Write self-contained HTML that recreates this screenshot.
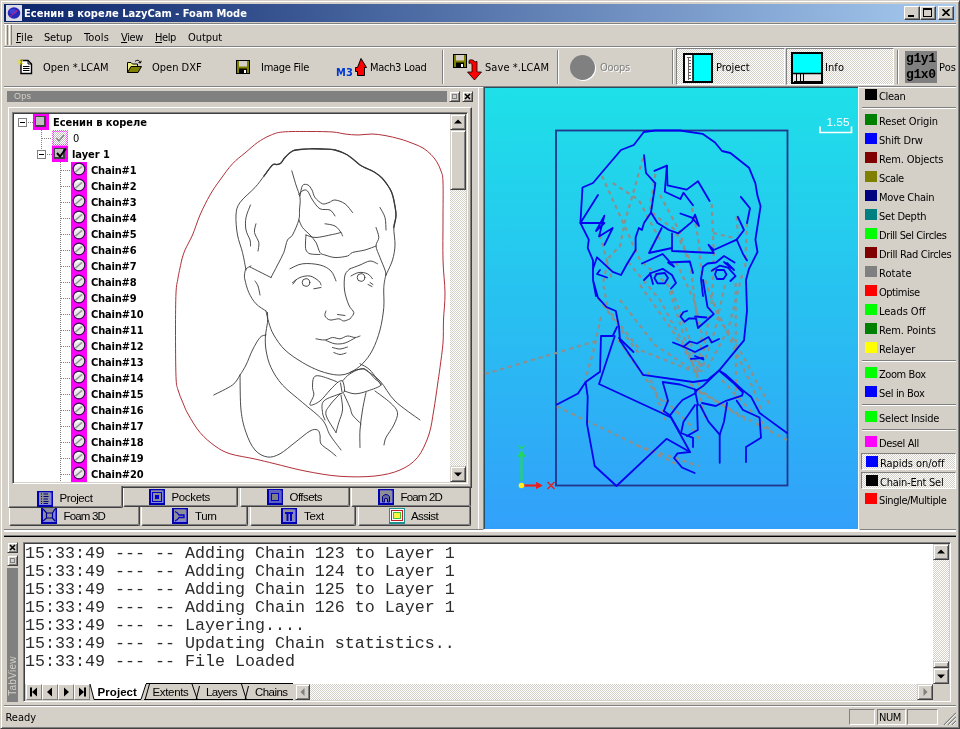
<!DOCTYPE html>
<html><head><meta charset="utf-8"><title>LazyCam</title>
<style>
*{box-sizing:border-box;margin:0;padding:0}
html,body{width:960px;height:729px;overflow:hidden;background:#d4d0c8}
body{position:relative;will-change:transform;font-family:"DejaVu Sans Condensed","Liberation Sans",sans-serif;font-size:11px;color:#000;line-height:1}
.a{position:absolute}
.t{position:absolute;white-space:nowrap;line-height:14px;height:14px}
.tb{font-family:"Liberation Sans",sans-serif;font-size:11.5px}
.raised{border:1px solid;border-color:#fff #404040 #404040 #fff;box-shadow:inset -1px -1px 0 #808080;background:#d4d0c8}
.raised2{border:1px solid;border-color:#d4d0c8 #404040 #404040 #d4d0c8;box-shadow:inset 1px 1px 0 #fff,inset -1px -1px 0 #808080;background:#d4d0c8}
.sunk{border:1px solid;border-color:#808080 #fff #fff #808080;box-shadow:inset 1px 1px 0 #404040,inset -1px -1px 0 #d4d0c8}
.sunk1{border:1px solid;border-color:#808080 #fff #fff #808080}
.chk{background:repeating-conic-gradient(#fff 0 25%,#d4d0c8 0 50%) 0 0/2px 2px}
.hl{background:#808080;border-bottom:1px solid #fff}
.vl{background:#808080;border-right:1px solid #fff}
.tab{background:#d4d0c8;border-left:1px solid #fff;border-right:1px solid #404040;border-bottom:1px solid #404040;box-shadow:inset -1px -1px 0 #808080;border-radius:0 0 2px 2px}
.log{position:absolute;left:25px;white-space:pre;font-family:"Liberation Mono",monospace;font-size:16.67px;line-height:18px;height:18px;color:#2c2c2c}
</style></head><body>
<div class="a" style="left:0;top:0;width:960px;height:729px;border:1px solid;border-color:#d4d0c8 #404040 #404040 #d4d0c8;box-shadow:inset 1px 1px 0 #fff,inset -1px -1px 0 #808080"></div>
<div class="a" id="title" style="left:4px;top:4px;width:952px;height:18px;background:linear-gradient(90deg,#0a246a,#a6caf0)"></div>
<div class="t" style="left:24px;top:7px;letter-spacing:0.02px;color:#fff;font-weight:bold;">Есенин в кореле LazyCam - Foam Mode</div>
<div class="a raised" style="left:904px;top:6px;width:16px;height:14px"></div>
<div class="a" style="left:908px;top:15px;width:6px;height:2px;background:#000"></div>
<div class="a raised" style="left:920px;top:6px;width:16px;height:14px"></div>
<div class="a" style="left:923px;top:8px;width:9px;height:9px;border:1px solid #000;border-top-width:2px"></div>
<div class="a raised" style="left:938px;top:6px;width:16px;height:14px"></div>
<svg class="a" style="left:942px;top:9px" width="8" height="7"><path d="M0.500 0L7.500 7M7.500 0L0.500 7" stroke="#000" stroke-width="1.600"/></svg>
<svg class="a" style="left:6px;top:5px" width="16" height="16"><rect width="16" height="16" fill="#dcdce8"/><ellipse cx="8" cy="8" rx="6.300" ry="5.700" fill="#2828b8"/><ellipse cx="7" cy="6.500" rx="3.500" ry="2.500" fill="#4040d8"/><path d="M4.500 11.500L7 9L9 7.500L11 5.500" stroke="#d02878" stroke-width="1.200" stroke-dasharray="1.500 1" fill="none"/></svg>
<div class="a" style="left:5px;top:25px;width:3px;height:20px;border-left:1px solid #fff;border-right:1px solid #808080"></div><div class="a" style="left:9px;top:25px;width:3px;height:20px;border-left:1px solid #fff;border-right:1px solid #808080"></div>
<div class="t" style="left:16px;top:31px;letter-spacing:0.13px;"><u>F</u>ile</div>
<div class="t" style="left:44px;top:31px;letter-spacing:-0.16px;">Setup</div>
<div class="t" style="left:84px;top:31px;letter-spacing:0.16px;">Tools</div>
<div class="t" style="left:121px;top:31px;letter-spacing:-0.37px;"><u>V</u>iew</div>
<div class="t" style="left:155px;top:31px;letter-spacing:-0.39px;"><u>H</u>elp</div>
<div class="t" style="left:188px;top:31px;letter-spacing:-0.06px;">Output</div>
<div class="a hl" style="left:4px;top:23px;width:952px;height:2px"></div>
<div class="a hl" style="left:4px;top:46px;width:952px;height:2px"></div>
<div class="a hl" style="left:4px;top:86px;width:952px;height:2px"></div>
<svg class="a" style="left:16px;top:58px" width="18" height="17"><path d="M5 2.500H12L15.500 6V15.500H5Z" fill="#fff" stroke="#000" stroke-width="1.400"/><path d="M12 2.500V6H15.500" fill="none" stroke="#000"/><path d="M7 8.500H13.500M7 10.500H13.500M7 12.500H13.500" stroke="#000" stroke-width="1"/><path d="M1 2L7 6M4 1L4 7M7 2L1 6" stroke="#e8e020" stroke-width="1"/></svg>
<div class="t" style="left:43px;top:61px;letter-spacing:0.01px;">Open *.LCAM</div>
<svg class="a" style="left:126px;top:58px" width="18" height="16"><path d="M1.500 14.500V4.500H5L6.500 6H11.500V8.500" fill="#f0f080" stroke="#000"/><path d="M1.500 14.500L5 8.500H15.500L12 14.500Z" fill="#808000" stroke="#000"/><path d="M9 3.500C11 1.500 13.500 2 14.500 5M14.500 5L12.500 4.500M14.500 5L15.200 2.800" fill="none" stroke="#000"/></svg>
<div class="t" style="left:152px;top:61px;">Open DXF</div>
<svg class="a" style="left:236px;top:60px" width="14" height="14"><rect x="0.500" y="0.500" width="13" height="13" fill="#808000" stroke="#000"/><rect x="3" y="1" width="8" height="5.500" fill="#d4d0c8"/><rect x="3" y="8.500" width="8" height="5" fill="#000"/><rect x="8" y="10" width="2" height="3" fill="#fff"/></svg>
<div class="t" style="left:261px;top:61px;letter-spacing:-0.26px;">Image File</div>
<div class="t" style="left:336px;top:66px;letter-spacing:0.12px;font-weight:bold;color:#0038d0;">M3</div>
<svg class="a" style="left:354px;top:57px" width="14" height="20"><path d="M7 1.500L12.500 10.500H10.500V18.500H3.500V14.500H1.500V10.500H3.500Z" fill="#f00" stroke="#000" stroke-width="1"/></svg>
<div class="t" style="left:370px;top:61px;letter-spacing:-0.30px;">Mach3 Load</div>
<div class="a vl" style="left:442px;top:50px;width:2px;height:34px"></div>
<svg class="a" style="left:453px;top:54px" width="14" height="14"><rect x="0.500" y="0.500" width="13" height="13" fill="#808000" stroke="#000"/><rect x="3" y="1" width="8" height="5.500" fill="#d4d0c8"/><rect x="3" y="8.500" width="8" height="5" fill="#000"/><rect x="8" y="10" width="2" height="3" fill="#fff"/></svg>
<svg class="a" style="left:466px;top:58px" width="18" height="24"><path d="M3 2.500C5 1 8 2 9 4L11 3.500V14H15.500L8.500 22L1.500 14H6V7C6 5 4.500 4.500 3 5.500Z" fill="#f00" stroke="#000" stroke-width="0.800"/></svg>
<div class="t" style="left:485px;top:61px;letter-spacing:0.07px;">Save *.LCAM</div>
<div class="a vl" style="left:557px;top:50px;width:2px;height:34px"></div>
<div class="a" style="left:570px;top:55px;width:25px;height:25px;border-radius:50%;background:#808080;box-shadow:1px 1px 0 #fff"></div>
<div class="t" style="left:600px;top:61px;letter-spacing:-0.27px;color:#808080;text-shadow:1px 1px 0 #fff;">Ooops</div>
<div class="a vl" style="left:672px;top:50px;width:2px;height:34px"></div>
<div class="a chk" style="left:676px;top:48px;width:109px;height:37px;border:1px solid;border-color:#808080 #fff #fff #808080"></div>
<svg class="a" style="left:683px;top:53px" width="30" height="30"><rect x="1" y="1" width="28" height="28" fill="#fff" stroke="#000" stroke-width="2"/><rect x="10" y="2" width="18" height="26" fill="#0ff"/><path d="M10 2V28" stroke="#000" stroke-width="1.500"/><path d="M5.500 4V27M4 4.500H8M5 7.500H8M5 10.500H8M5 13.500H8M5 16.500H8M5 19.500H8M5 22.500H8M5 25.500H8" stroke="#606060" stroke-width="1"/></svg>
<div class="t" style="left:716px;top:61px;letter-spacing:-0.04px;">Project</div>
<div class="a chk" style="left:786px;top:48px;width:108px;height:37px;border:1px solid;border-color:#808080 #fff #fff #808080"></div>
<svg class="a" style="left:791px;top:52px" width="32" height="32"><rect x="1" y="1" width="30" height="30" fill="#fff" stroke="#000" stroke-width="2"/><rect x="2" y="2" width="28" height="19" fill="#0ff"/><rect x="2" y="22" width="28" height="8" fill="#ebe9e5"/><path d="M2 21.500H30" stroke="#000" stroke-width="1.500"/><path d="M5.500 22V29.500M9.500 22V29.500M12.500 22V29.500M3 29.500H30" stroke="#000" stroke-width="1"/></svg>
<div class="t" style="left:825px;top:61px;letter-spacing:0.07px;">Info</div>
<div class="a vl" style="left:897px;top:50px;width:2px;height:34px"></div>
<div class="a" style="left:905px;top:51px;width:32px;height:32px;background:#808080"></div>
<div class="t" style="left:906px;top:52px;font-family:'Liberation Mono',monospace;font-weight:bold;font-size:13px;letter-spacing:-0.400px">g1y1</div>
<div class="t" style="left:906px;top:68px;font-family:'Liberation Mono',monospace;font-weight:bold;font-size:13px;letter-spacing:-0.400px">g1x0</div>
<div class="t" style="left:939px;top:61px;letter-spacing:0.07px;">Pos</div>
<div class="a" style="left:7px;top:91px;width:440px;height:11px;background:#808080"></div>
<div class="t" style="left:14px;top:90px;color:#d4d0c8;font-size:9px;line-height:13px;letter-spacing:0.3px;font-family:'Liberation Sans',sans-serif">Ops</div>
<div class="a raised2" style="left:449px;top:91px;width:11px;height:11px"></div>
<div class="a" style="left:452px;top:94px;width:5px;height:5px;border:1px solid #808080"></div>
<div class="a raised2" style="left:462px;top:91px;width:11px;height:11px"></div>
<svg class="a" style="left:464px;top:93px" width="7" height="7"><path d="M1 1L6 6M6 1L1 6" stroke="#000" stroke-width="1.600"/></svg>
<div class="a" style="left:478px;top:88px;width:1px;height:441px;background:#fff"></div>
<div class="a" style="left:4px;top:529px;width:480px;height:1px;background:#808080"></div>
<div class="a" style="left:8px;top:107px;width:464px;height:381px;border:1px solid;border-color:#fff #404040 #404040 #fff;box-shadow:inset -1px -1px 0 #808080"></div>
<div class="a sunk" style="left:12px;top:112px;width:456px;height:372px;background:#fff"></div>
<div class="a chk" style="left:450px;top:114px;width:16px;height:368px"></div>
<div class="a raised2" style="left:450px;top:114px;width:16px;height:16px"></div>
<svg class="a" style="left:454px;top:119px" width="8" height="5"><path d="M0 4.500L4 0.500L8 4.500Z" fill="#000"/></svg>
<div class="a raised2" style="left:450px;top:130px;width:16px;height:60px"></div>
<div class="a raised2" style="left:450px;top:466px;width:16px;height:16px"></div>
<svg class="a" style="left:454px;top:472px" width="8" height="5"><path d="M0 0.500L4 4.500L8 0.500Z" fill="#000"/></svg>
<div id="tree">
<div class="a" style="left:18px;top:118px;width:9px;height:9px;border:1px solid #808080;background:#fff"></div><div class="a" style="left:20px;top:122px;width:5px;height:1px;background:#000"></div>
<div class="a" style="left:28px;top:122px;width:5px;height:1px;background:repeating-linear-gradient(90deg,#808080 0 1px,transparent 1px 2px)"></div>
<div class="a" style="left:33px;top:114px;width:16px;height:16px;background:#f0f"></div>
<div class="a" style="left:35px;top:116px;width:11px;height:11px;background:#c0c0c0;border:1px solid #404040;border-right-width:2px;border-bottom-width:2px"></div>
<div class="t" style="left:53px;top:116px;letter-spacing:-0.03px;font-weight:bold;">Есенин в кореле</div>
<div class="a" style="left:41px;top:130px;width:1px;height:20px;background:repeating-linear-gradient(180deg,#808080 0 1px,transparent 1px 2px)"></div>
<div class="a" style="left:42px;top:138px;width:10px;height:1px;background:repeating-linear-gradient(90deg,#808080 0 1px,transparent 1px 2px)"></div>
<div class="a" style="left:52px;top:130px;width:16px;height:16px;background:repeating-conic-gradient(#f0f 0 25%,#fff 0 50%) 0 0/2px 2px;opacity:.75"></div>
<div class="a" style="left:54px;top:132px;width:12px;height:12px;background:repeating-conic-gradient(#c0c0c0 0 25%,#fff 0 50%) 0 0/2px 2px"></div>
<svg class="a" style="left:55px;top:133px" width="10" height="10"><path d="M1.500 5L4 8L9 2" stroke="#808080" fill="none" stroke-width="1.300"/></svg>
<div class="t" style="left:73px;top:132px;">0</div>
<div class="a" style="left:37px;top:150px;width:9px;height:9px;border:1px solid #808080;background:#fff"></div><div class="a" style="left:39px;top:154px;width:5px;height:1px;background:#000"></div>
<div class="a" style="left:47px;top:154px;width:5px;height:1px;background:repeating-linear-gradient(90deg,#808080 0 1px,transparent 1px 2px)"></div>
<div class="a" style="left:52px;top:146px;width:16px;height:16px;background:#f0f"></div>
<div class="a" style="left:54px;top:148px;width:11px;height:11px;background:#c0c0c0;border:1px solid #404040;border-right-width:2px;border-bottom-width:2px"></div>
<svg class="a" style="left:55px;top:147px" width="13" height="12"><path d="M2 6L5 9.500L11 1.500" stroke="#000" fill="none" stroke-width="2"/></svg>
<div class="t" style="left:72px;top:148px;letter-spacing:-0.02px;font-weight:bold;">layer 1</div>
<div class="a" style="left:60px;top:162px;width:1px;height:320px;background:repeating-linear-gradient(180deg,#808080 0 1px,transparent 1px 2px)"></div>
<div class="a" style="left:71px;top:162px;width:16px;height:320px;background:#f0f"></div>
<div class="a" style="left:61px;top:170px;width:10px;height:1px;background:repeating-linear-gradient(90deg,#808080 0 1px,transparent 1px 2px)"></div>
<svg class="a" style="left:72px;top:162px" width="14" height="14"><circle cx="7" cy="7" r="5.800" fill="#e8e8e8" stroke="#301040" stroke-width="1.200"/><path d="M3.500 10L10 4.500" stroke="#909090" stroke-width="1.600"/><path d="M4 5.500A4 4 0 0 1 8 3" stroke="#fff" stroke-width="1.500" fill="none"/></svg>
<div class="t" style="left:91px;top:164px;letter-spacing:-0.16px;font-weight:bold;">Chain#1</div>
<div class="a" style="left:61px;top:186px;width:10px;height:1px;background:repeating-linear-gradient(90deg,#808080 0 1px,transparent 1px 2px)"></div>
<svg class="a" style="left:72px;top:178px" width="14" height="14"><circle cx="7" cy="7" r="5.800" fill="#e8e8e8" stroke="#301040" stroke-width="1.200"/><path d="M3.500 10L10 4.500" stroke="#909090" stroke-width="1.600"/><path d="M4 5.500A4 4 0 0 1 8 3" stroke="#fff" stroke-width="1.500" fill="none"/></svg>
<div class="t" style="left:91px;top:180px;letter-spacing:-0.16px;font-weight:bold;">Chain#2</div>
<div class="a" style="left:61px;top:202px;width:10px;height:1px;background:repeating-linear-gradient(90deg,#808080 0 1px,transparent 1px 2px)"></div>
<svg class="a" style="left:72px;top:194px" width="14" height="14"><circle cx="7" cy="7" r="5.800" fill="#e8e8e8" stroke="#301040" stroke-width="1.200"/><path d="M3.500 10L10 4.500" stroke="#909090" stroke-width="1.600"/><path d="M4 5.500A4 4 0 0 1 8 3" stroke="#fff" stroke-width="1.500" fill="none"/></svg>
<div class="t" style="left:91px;top:196px;letter-spacing:-0.16px;font-weight:bold;">Chain#3</div>
<div class="a" style="left:61px;top:218px;width:10px;height:1px;background:repeating-linear-gradient(90deg,#808080 0 1px,transparent 1px 2px)"></div>
<svg class="a" style="left:72px;top:210px" width="14" height="14"><circle cx="7" cy="7" r="5.800" fill="#e8e8e8" stroke="#301040" stroke-width="1.200"/><path d="M3.500 10L10 4.500" stroke="#909090" stroke-width="1.600"/><path d="M4 5.500A4 4 0 0 1 8 3" stroke="#fff" stroke-width="1.500" fill="none"/></svg>
<div class="t" style="left:91px;top:212px;letter-spacing:-0.16px;font-weight:bold;">Chain#4</div>
<div class="a" style="left:61px;top:234px;width:10px;height:1px;background:repeating-linear-gradient(90deg,#808080 0 1px,transparent 1px 2px)"></div>
<svg class="a" style="left:72px;top:226px" width="14" height="14"><circle cx="7" cy="7" r="5.800" fill="#e8e8e8" stroke="#301040" stroke-width="1.200"/><path d="M3.500 10L10 4.500" stroke="#909090" stroke-width="1.600"/><path d="M4 5.500A4 4 0 0 1 8 3" stroke="#fff" stroke-width="1.500" fill="none"/></svg>
<div class="t" style="left:91px;top:228px;letter-spacing:-0.16px;font-weight:bold;">Chain#5</div>
<div class="a" style="left:61px;top:250px;width:10px;height:1px;background:repeating-linear-gradient(90deg,#808080 0 1px,transparent 1px 2px)"></div>
<svg class="a" style="left:72px;top:242px" width="14" height="14"><circle cx="7" cy="7" r="5.800" fill="#e8e8e8" stroke="#301040" stroke-width="1.200"/><path d="M3.500 10L10 4.500" stroke="#909090" stroke-width="1.600"/><path d="M4 5.500A4 4 0 0 1 8 3" stroke="#fff" stroke-width="1.500" fill="none"/></svg>
<div class="t" style="left:91px;top:244px;letter-spacing:-0.16px;font-weight:bold;">Chain#6</div>
<div class="a" style="left:61px;top:266px;width:10px;height:1px;background:repeating-linear-gradient(90deg,#808080 0 1px,transparent 1px 2px)"></div>
<svg class="a" style="left:72px;top:258px" width="14" height="14"><circle cx="7" cy="7" r="5.800" fill="#e8e8e8" stroke="#301040" stroke-width="1.200"/><path d="M3.500 10L10 4.500" stroke="#909090" stroke-width="1.600"/><path d="M4 5.500A4 4 0 0 1 8 3" stroke="#fff" stroke-width="1.500" fill="none"/></svg>
<div class="t" style="left:91px;top:260px;letter-spacing:-0.16px;font-weight:bold;">Chain#7</div>
<div class="a" style="left:61px;top:282px;width:10px;height:1px;background:repeating-linear-gradient(90deg,#808080 0 1px,transparent 1px 2px)"></div>
<svg class="a" style="left:72px;top:274px" width="14" height="14"><circle cx="7" cy="7" r="5.800" fill="#e8e8e8" stroke="#301040" stroke-width="1.200"/><path d="M3.500 10L10 4.500" stroke="#909090" stroke-width="1.600"/><path d="M4 5.500A4 4 0 0 1 8 3" stroke="#fff" stroke-width="1.500" fill="none"/></svg>
<div class="t" style="left:91px;top:276px;letter-spacing:-0.16px;font-weight:bold;">Chain#8</div>
<div class="a" style="left:61px;top:298px;width:10px;height:1px;background:repeating-linear-gradient(90deg,#808080 0 1px,transparent 1px 2px)"></div>
<svg class="a" style="left:72px;top:290px" width="14" height="14"><circle cx="7" cy="7" r="5.800" fill="#e8e8e8" stroke="#301040" stroke-width="1.200"/><path d="M3.500 10L10 4.500" stroke="#909090" stroke-width="1.600"/><path d="M4 5.500A4 4 0 0 1 8 3" stroke="#fff" stroke-width="1.500" fill="none"/></svg>
<div class="t" style="left:91px;top:292px;letter-spacing:-0.16px;font-weight:bold;">Chain#9</div>
<div class="a" style="left:61px;top:314px;width:10px;height:1px;background:repeating-linear-gradient(90deg,#808080 0 1px,transparent 1px 2px)"></div>
<svg class="a" style="left:72px;top:306px" width="14" height="14"><circle cx="7" cy="7" r="5.800" fill="#e8e8e8" stroke="#301040" stroke-width="1.200"/><path d="M3.500 10L10 4.500" stroke="#909090" stroke-width="1.600"/><path d="M4 5.500A4 4 0 0 1 8 3" stroke="#fff" stroke-width="1.500" fill="none"/></svg>
<div class="t" style="left:91px;top:308px;letter-spacing:-0.12px;font-weight:bold;">Chain#10</div>
<div class="a" style="left:61px;top:330px;width:10px;height:1px;background:repeating-linear-gradient(90deg,#808080 0 1px,transparent 1px 2px)"></div>
<svg class="a" style="left:72px;top:322px" width="14" height="14"><circle cx="7" cy="7" r="5.800" fill="#e8e8e8" stroke="#301040" stroke-width="1.200"/><path d="M3.500 10L10 4.500" stroke="#909090" stroke-width="1.600"/><path d="M4 5.500A4 4 0 0 1 8 3" stroke="#fff" stroke-width="1.500" fill="none"/></svg>
<div class="t" style="left:91px;top:324px;letter-spacing:-0.12px;font-weight:bold;">Chain#11</div>
<div class="a" style="left:61px;top:346px;width:10px;height:1px;background:repeating-linear-gradient(90deg,#808080 0 1px,transparent 1px 2px)"></div>
<svg class="a" style="left:72px;top:338px" width="14" height="14"><circle cx="7" cy="7" r="5.800" fill="#e8e8e8" stroke="#301040" stroke-width="1.200"/><path d="M3.500 10L10 4.500" stroke="#909090" stroke-width="1.600"/><path d="M4 5.500A4 4 0 0 1 8 3" stroke="#fff" stroke-width="1.500" fill="none"/></svg>
<div class="t" style="left:91px;top:340px;letter-spacing:-0.12px;font-weight:bold;">Chain#12</div>
<div class="a" style="left:61px;top:362px;width:10px;height:1px;background:repeating-linear-gradient(90deg,#808080 0 1px,transparent 1px 2px)"></div>
<svg class="a" style="left:72px;top:354px" width="14" height="14"><circle cx="7" cy="7" r="5.800" fill="#e8e8e8" stroke="#301040" stroke-width="1.200"/><path d="M3.500 10L10 4.500" stroke="#909090" stroke-width="1.600"/><path d="M4 5.500A4 4 0 0 1 8 3" stroke="#fff" stroke-width="1.500" fill="none"/></svg>
<div class="t" style="left:91px;top:356px;letter-spacing:-0.12px;font-weight:bold;">Chain#13</div>
<div class="a" style="left:61px;top:378px;width:10px;height:1px;background:repeating-linear-gradient(90deg,#808080 0 1px,transparent 1px 2px)"></div>
<svg class="a" style="left:72px;top:370px" width="14" height="14"><circle cx="7" cy="7" r="5.800" fill="#e8e8e8" stroke="#301040" stroke-width="1.200"/><path d="M3.500 10L10 4.500" stroke="#909090" stroke-width="1.600"/><path d="M4 5.500A4 4 0 0 1 8 3" stroke="#fff" stroke-width="1.500" fill="none"/></svg>
<div class="t" style="left:91px;top:372px;letter-spacing:-0.12px;font-weight:bold;">Chain#14</div>
<div class="a" style="left:61px;top:394px;width:10px;height:1px;background:repeating-linear-gradient(90deg,#808080 0 1px,transparent 1px 2px)"></div>
<svg class="a" style="left:72px;top:386px" width="14" height="14"><circle cx="7" cy="7" r="5.800" fill="#e8e8e8" stroke="#301040" stroke-width="1.200"/><path d="M3.500 10L10 4.500" stroke="#909090" stroke-width="1.600"/><path d="M4 5.500A4 4 0 0 1 8 3" stroke="#fff" stroke-width="1.500" fill="none"/></svg>
<div class="t" style="left:91px;top:388px;letter-spacing:-0.12px;font-weight:bold;">Chain#15</div>
<div class="a" style="left:61px;top:410px;width:10px;height:1px;background:repeating-linear-gradient(90deg,#808080 0 1px,transparent 1px 2px)"></div>
<svg class="a" style="left:72px;top:402px" width="14" height="14"><circle cx="7" cy="7" r="5.800" fill="#e8e8e8" stroke="#301040" stroke-width="1.200"/><path d="M3.500 10L10 4.500" stroke="#909090" stroke-width="1.600"/><path d="M4 5.500A4 4 0 0 1 8 3" stroke="#fff" stroke-width="1.500" fill="none"/></svg>
<div class="t" style="left:91px;top:404px;letter-spacing:-0.12px;font-weight:bold;">Chain#16</div>
<div class="a" style="left:61px;top:426px;width:10px;height:1px;background:repeating-linear-gradient(90deg,#808080 0 1px,transparent 1px 2px)"></div>
<svg class="a" style="left:72px;top:418px" width="14" height="14"><circle cx="7" cy="7" r="5.800" fill="#e8e8e8" stroke="#301040" stroke-width="1.200"/><path d="M3.500 10L10 4.500" stroke="#909090" stroke-width="1.600"/><path d="M4 5.500A4 4 0 0 1 8 3" stroke="#fff" stroke-width="1.500" fill="none"/></svg>
<div class="t" style="left:91px;top:420px;letter-spacing:-0.12px;font-weight:bold;">Chain#17</div>
<div class="a" style="left:61px;top:442px;width:10px;height:1px;background:repeating-linear-gradient(90deg,#808080 0 1px,transparent 1px 2px)"></div>
<svg class="a" style="left:72px;top:434px" width="14" height="14"><circle cx="7" cy="7" r="5.800" fill="#e8e8e8" stroke="#301040" stroke-width="1.200"/><path d="M3.500 10L10 4.500" stroke="#909090" stroke-width="1.600"/><path d="M4 5.500A4 4 0 0 1 8 3" stroke="#fff" stroke-width="1.500" fill="none"/></svg>
<div class="t" style="left:91px;top:436px;letter-spacing:-0.12px;font-weight:bold;">Chain#18</div>
<div class="a" style="left:61px;top:458px;width:10px;height:1px;background:repeating-linear-gradient(90deg,#808080 0 1px,transparent 1px 2px)"></div>
<svg class="a" style="left:72px;top:450px" width="14" height="14"><circle cx="7" cy="7" r="5.800" fill="#e8e8e8" stroke="#301040" stroke-width="1.200"/><path d="M3.500 10L10 4.500" stroke="#909090" stroke-width="1.600"/><path d="M4 5.500A4 4 0 0 1 8 3" stroke="#fff" stroke-width="1.500" fill="none"/></svg>
<div class="t" style="left:91px;top:452px;letter-spacing:-0.12px;font-weight:bold;">Chain#19</div>
<div class="a" style="left:61px;top:474px;width:10px;height:1px;background:repeating-linear-gradient(90deg,#808080 0 1px,transparent 1px 2px)"></div>
<svg class="a" style="left:72px;top:466px" width="14" height="14"><circle cx="7" cy="7" r="5.800" fill="#e8e8e8" stroke="#301040" stroke-width="1.200"/><path d="M3.500 10L10 4.500" stroke="#909090" stroke-width="1.600"/><path d="M4 5.500A4 4 0 0 1 8 3" stroke="#fff" stroke-width="1.500" fill="none"/></svg>
<div class="t" style="left:91px;top:468px;letter-spacing:-0.12px;font-weight:bold;">Chain#20</div>
</div>
<svg class="a" id="portrait" style="left:0;top:0" width="960" height="729" viewBox="0 0 960 729" fill="none" stroke-linecap="round" stroke-linejoin="round"><path d="M181.7 260.0C182.2 258.3 183.2 254.2 185.0 250.0C186.8 245.8 190.0 240.8 192.5 235.0C195.0 229.2 197.1 221.7 200.0 215.0C202.9 208.3 206.7 200.8 210.0 195.0C213.3 189.2 216.2 185.2 220.0 180.0C223.8 174.8 228.3 168.2 232.5 163.8C236.7 159.2 240.8 156.5 245.0 153.0C249.2 149.5 253.3 145.4 257.5 142.5C261.7 139.6 265.8 137.2 270.0 135.5C274.2 133.8 275.8 132.7 282.5 132.0C289.2 131.3 301.6 131.5 310.0 131.5C318.4 131.5 327.2 131.6 333.0 132.0C338.8 132.4 340.8 133.5 345.0 134.0C349.2 134.5 353.5 135.0 358.0 135.0C362.5 135.0 367.5 133.9 372.0 134.0C376.5 134.1 380.3 134.7 385.0 135.5C389.7 136.3 395.3 137.7 400.0 139.0C404.7 140.3 409.2 142.0 413.0 143.5C416.8 145.0 420.0 146.2 423.0 148.0C426.0 149.8 428.7 152.2 431.0 154.5C433.3 156.8 435.0 158.9 436.7 161.7C438.4 164.4 439.9 167.6 441.0 171.0C442.1 174.4 442.7 173.8 443.0 182.0C443.3 190.2 443.0 207.0 443.0 220.0C443.0 233.0 442.7 247.8 443.0 260.0C443.3 272.2 444.9 283.0 445.0 293.0C445.1 303.0 443.8 311.7 443.5 320.0C443.2 328.3 443.6 335.1 443.0 343.0C442.4 350.9 440.9 360.5 440.0 367.5C439.1 374.5 438.5 377.9 437.5 385.0C436.5 392.1 435.2 401.7 433.8 410.0C432.3 418.3 431.5 427.1 428.8 435.0C426.0 442.9 422.3 451.7 417.5 457.5C412.7 463.3 407.1 466.9 400.0 470.0C392.9 473.1 385.0 474.9 375.0 476.0C365.0 477.1 351.7 477.1 340.0 476.3C328.3 475.5 315.8 473.1 305.0 471.0C294.2 468.9 283.3 465.8 275.0 463.8C266.7 461.8 262.5 460.7 255.0 459.0C247.5 457.3 236.7 455.9 230.0 453.8C223.3 451.6 220.0 449.5 215.0 446.0C210.0 442.5 204.5 437.8 200.0 432.5C195.5 427.2 190.8 418.9 188.0 414.0C185.2 409.1 184.7 407.0 183.0 403.0C181.3 399.0 179.2 394.4 178.0 390.0C176.8 385.6 176.4 386.7 176.0 376.7C175.6 366.7 175.5 343.9 175.5 330.0C175.5 316.1 175.6 301.7 176.0 293.0C176.4 284.3 177.1 283.5 178.0 278.0C178.9 272.5 181.1 263.0 181.7 260.0" stroke="#b03038" stroke-width="1"/><g stroke="#383838" stroke-width="0.9"><path d="M246.0 270.0C245.4 267.1 243.9 258.3 242.5 252.5C241.1 246.7 238.6 241.2 237.5 235.0C236.4 228.8 235.6 220.4 236.0 215.0C236.4 209.6 236.8 207.1 240.0 202.5C243.2 197.9 251.0 191.9 255.0 187.5C259.0 183.1 261.1 179.8 264.0 176.0C266.9 172.2 270.3 166.9 272.5 165.0C274.7 163.1 275.6 164.8 277.0 164.5C278.4 164.2 279.7 164.2 281.0 163.0C282.3 161.8 283.1 159.5 285.0 157.5C286.9 155.5 290.0 152.3 292.5 151.0C295.0 149.7 297.1 149.9 300.0 149.5C302.9 149.1 306.3 148.8 310.0 148.8C313.7 148.7 317.8 148.8 322.0 149.0C326.2 149.2 330.8 149.0 335.0 150.0C339.2 151.0 343.3 152.5 347.5 155.0C351.7 157.5 356.6 162.7 360.0 165.0C363.4 167.3 365.5 167.8 368.0 169.0C370.5 170.2 372.7 171.0 375.0 172.5C377.3 174.0 379.9 175.9 382.0 178.0C384.1 180.1 385.9 182.7 387.5 185.0C389.1 187.3 390.5 189.5 391.5 192.0C392.5 194.5 393.0 196.2 393.8 200.0C394.5 203.8 396.0 210.4 396.0 215.0C396.0 219.6 393.9 222.5 393.8 227.5C393.6 232.5 395.2 239.6 395.0 245.0C394.8 250.4 394.0 255.0 392.5 260.0C391.0 265.0 387.1 272.5 386.0 275.0"/><path d="M291.8 170.8C292.5 173.1 294.6 180.5 296.0 185.0C297.4 189.5 299.4 193.3 300.0 197.5C300.6 201.7 299.7 206.2 299.5 210.0C299.3 213.8 299.9 215.8 298.8 220.0C297.6 224.2 294.4 231.7 292.5 235.0C290.6 238.3 289.0 237.1 287.5 240.0C286.0 242.9 285.4 248.3 283.8 252.5C282.1 256.7 279.6 260.8 277.5 265.0C275.4 269.2 272.1 275.4 271.0 277.5"/><path d="M271.0 277.5C269.2 276.6 263.5 273.8 260.0 272.0C256.5 270.2 251.7 267.8 250.0 267.0"/><path d="M300.0 196.0C300.4 194.2 301.2 187.3 302.5 185.5C303.8 183.7 306.4 184.2 308.0 185.0C309.6 185.8 310.8 187.9 312.0 190.0C313.2 192.1 313.2 195.2 315.0 197.5C316.8 199.8 320.2 202.9 322.5 203.8C324.8 204.6 326.9 203.1 329.0 202.5C331.1 201.9 332.3 199.8 335.0 200.0C337.7 200.2 342.1 201.7 345.0 203.8C347.9 205.8 351.2 211.0 352.5 212.5"/><path d="M298.8 194.5C299.5 193.8 301.5 191.1 303.0 190.5C304.5 189.9 305.9 189.4 307.5 191.0C309.1 192.6 310.4 197.0 312.5 200.0C314.6 203.0 317.1 207.1 320.0 208.8C322.9 210.4 327.5 208.8 330.0 210.0C332.5 211.2 334.2 215.0 335.0 216.0"/><path d="M325.0 223.8C326.7 224.1 332.3 224.5 335.0 226.0C337.7 227.5 339.8 230.8 341.0 232.5C342.2 234.2 342.2 235.4 342.5 236.0"/><path d="M306.0 235.0C307.7 235.4 311.6 237.6 316.0 237.5C320.4 237.4 328.3 235.3 332.5 234.5C336.7 233.7 339.6 232.8 341.0 232.5"/><path d="M299.0 220.0C299.6 221.2 300.7 225.0 302.5 227.5C304.3 230.0 307.8 232.5 310.0 235.0C312.2 237.5 314.3 239.6 316.0 242.5C317.7 245.4 318.5 250.4 320.0 252.5C321.5 254.6 322.5 254.2 325.0 255.0C327.5 255.8 331.2 257.3 335.0 257.5C338.8 257.7 344.6 256.8 347.5 256.0C350.4 255.2 349.6 253.5 352.5 252.5C355.4 251.5 361.1 251.1 365.0 250.0C368.9 248.9 374.2 246.7 376.0 246.0"/><path d="M306.0 235.0C305.9 236.3 305.5 240.5 305.5 243.0C305.5 245.5 305.2 248.2 306.0 250.0C306.8 251.8 307.7 253.0 310.0 253.8C312.3 254.5 318.3 254.4 320.0 254.5"/><path d="M380.0 207.5C380.8 209.2 384.0 213.8 385.0 217.5C386.0 221.2 385.8 227.9 386.0 230.0"/><path d="M376.0 227.5C376.5 229.2 378.8 234.4 378.8 237.5C378.8 240.6 375.8 242.7 376.0 246.0C376.2 249.3 378.5 253.5 380.0 257.5C381.5 261.5 384.0 267.1 385.0 270.0C386.0 272.9 385.8 274.2 386.0 275.0"/><path d="M250.5 205.0C249.8 207.1 246.8 213.3 246.0 217.5C245.2 221.7 245.3 226.2 246.0 230.0C246.7 233.8 249.2 237.3 250.0 240.0C250.8 242.7 250.4 245.0 250.5 246.0"/><path d="M256.0 223.8C255.8 225.2 254.0 229.4 254.5 232.5C255.0 235.6 258.2 239.4 258.8 242.5C259.3 245.6 258.1 249.6 258.0 251.0"/><path d="M251.0 266.0C250.2 266.5 247.1 267.5 246.0 269.0C244.9 270.5 244.7 273.2 244.5 275.0C244.3 276.8 244.3 277.1 245.0 280.0C245.7 282.9 246.9 288.5 248.8 292.5C250.6 296.5 253.1 300.7 256.0 303.8C258.9 306.8 264.3 309.8 266.0 311.0"/><path d="M255.0 281.0C255.5 281.8 257.2 283.7 258.0 286.0C258.8 288.3 259.7 293.5 260.0 295.0"/><path d="M266.0 311.0C266.5 312.9 267.5 318.5 268.8 322.5C270.0 326.5 271.0 330.4 273.8 335.0C276.5 339.6 280.2 345.4 285.0 350.0C289.8 354.6 296.7 359.0 302.5 362.5C308.3 366.0 314.2 368.9 320.0 371.0C325.8 373.1 332.5 374.8 337.5 375.0C342.5 375.2 345.8 374.4 350.0 372.5C354.2 370.6 358.8 367.5 362.5 363.8C366.2 360.0 369.6 355.6 372.5 350.0C375.4 344.4 378.1 337.1 380.0 330.0C381.9 322.9 383.1 314.6 383.8 307.5C384.4 300.4 383.4 293.1 383.8 287.5C384.1 281.9 385.6 276.2 386.0 274.0"/><path d="M290.0 268.8C292.1 267.9 297.5 264.4 302.5 263.8C307.5 263.1 315.2 263.8 320.0 265.0C324.8 266.2 328.3 268.3 331.0 271.0C333.7 273.7 335.2 279.3 336.0 281.0"/><path d="M292.5 282.5C293.8 281.7 297.1 278.6 300.0 277.5C302.9 276.4 306.9 275.4 310.0 276.0C313.1 276.6 316.9 279.5 318.8 281.0C320.6 282.5 320.6 284.3 321.0 285.0"/><path d="M313.8 288.8L321.0 287.5"/><path d="M296.0 280.0L293.0 284.0"/><path d="M350.0 268.8C349.2 269.8 345.9 271.5 345.0 275.0C344.1 278.5 343.9 285.0 344.5 290.0C345.1 295.0 347.2 301.2 348.8 305.0C350.3 308.8 353.4 310.4 353.8 312.5C354.1 314.6 351.6 316.5 351.0 317.5C350.4 318.5 351.2 318.2 350.0 318.8C348.8 319.3 345.6 321.0 343.8 321.0C341.9 321.0 341.0 318.9 338.8 318.8C336.5 318.6 332.3 320.5 330.0 320.0C327.7 319.5 325.7 317.5 325.0 316.0C324.3 314.5 325.8 311.8 326.0 311.0"/><path d="M337.5 314.5L345.0 315.5"/><path d="M350.0 268.8C351.7 268.1 356.7 266.3 360.0 265.0C363.3 263.7 367.1 261.2 370.0 261.0C372.9 260.8 376.2 263.3 377.5 263.8"/><path d="M351.0 276.0C352.3 275.4 356.0 272.9 358.8 272.5C361.5 272.1 365.2 272.7 367.5 273.8C369.8 274.8 371.7 277.9 372.5 278.8"/><path d="M370.0 282.5L373.0 284.5"/><path d="M368.0 284.5L372.0 286.5"/><path d="M316.0 338.8C317.5 339.0 322.2 340.2 325.0 340.0C327.8 339.8 330.0 337.7 332.5 337.5C335.0 337.3 337.5 339.0 340.0 338.8C342.5 338.5 345.0 336.2 347.5 336.0C350.0 335.8 352.9 337.5 355.0 337.5C357.1 337.5 359.2 336.2 360.0 336.0"/><path d="M326.0 340.5C327.5 341.0 331.8 343.3 335.0 343.8C338.2 344.2 341.7 344.0 345.0 343.0C348.3 342.0 353.3 338.8 355.0 338.0"/><path d="M332.5 347.5C333.8 347.8 337.5 349.1 340.0 349.0C342.5 348.9 346.2 347.3 347.5 347.0"/><path d="M333.8 352.5C334.8 352.8 338.0 354.4 340.0 354.5C342.0 354.6 345.0 353.2 346.0 353.0"/><path d="M267.5 312.5C267.5 314.2 267.8 318.8 267.5 322.5C267.2 326.2 265.8 330.4 265.5 335.0C265.2 339.6 265.1 344.6 266.0 350.0C266.9 355.4 268.2 361.7 271.0 367.5C273.8 373.3 277.2 379.2 282.5 385.0C287.8 390.8 295.8 396.7 302.5 402.5C309.2 408.3 317.9 414.6 322.5 420.0C327.1 425.4 326.9 430.0 330.0 435.0C333.1 440.0 339.2 447.5 341.0 450.0"/><path d="M266.0 335.0C265.0 335.4 262.2 335.0 260.0 337.5C257.8 340.0 254.8 345.4 252.5 350.0C250.2 354.6 248.1 360.8 246.0 365.0C243.9 369.2 242.2 371.7 240.0 375.0C237.8 378.3 236.9 381.7 232.5 385.0C228.1 388.3 216.9 393.3 213.8 395.0"/><path d="M240.0 375.0C240.2 380.8 240.0 400.4 241.0 410.0C242.0 419.6 243.7 425.8 246.0 432.5C248.3 439.2 251.4 445.9 255.0 450.0C258.6 454.1 263.3 456.4 267.5 457.0C271.7 457.6 275.4 456.2 280.0 453.8C284.6 451.3 290.0 446.3 295.0 442.5C300.0 438.7 306.2 433.1 310.0 431.0C313.8 428.9 315.8 429.3 317.5 430.0C319.2 430.7 319.4 432.7 320.0 435.0C320.6 437.3 319.3 441.1 321.0 443.8C322.7 446.4 327.5 449.0 330.0 451.0C332.5 453.0 335.0 455.2 336.0 456.0"/><path d="M337.5 382.5C337.1 382.2 337.9 382.1 335.0 381.0C332.1 379.9 323.5 376.6 320.0 376.0C316.5 375.4 315.0 375.6 313.8 377.5C312.5 379.4 312.5 384.6 312.5 387.5C312.5 390.4 314.2 392.1 313.8 395.0C313.3 397.9 309.0 404.0 310.0 405.0C311.0 406.0 316.7 403.5 320.0 401.0C323.3 398.5 327.1 393.1 330.0 390.0C332.9 386.9 336.2 383.8 337.5 382.5"/><path d="M337.5 382.5C338.3 382.2 341.3 379.6 342.5 381.0C343.7 382.4 344.9 388.9 344.5 391.0C344.1 393.1 340.8 393.3 340.0 393.8"/><path d="M340.5 383.0L342.0 392.0"/><path d="M344.5 391.0C346.2 391.5 351.2 393.8 355.0 393.8C358.8 393.8 363.2 392.5 367.5 391.0C371.8 389.5 379.8 387.0 381.0 385.0C382.2 383.0 377.9 381.5 375.0 378.8C372.1 376.0 367.9 369.6 363.8 368.8C359.6 367.9 353.5 371.7 350.0 373.8C346.5 375.8 343.8 379.8 342.5 381.0"/><path d="M340.0 393.8C337.3 395.0 326.7 397.9 323.8 401.0C320.8 404.1 322.3 409.3 322.5 412.5C322.7 415.7 324.6 418.8 325.0 420.0"/><path d="M340.0 394.0C338.3 395.8 332.3 401.5 330.0 405.0C327.7 408.5 325.0 410.4 326.0 415.0C327.0 419.6 334.3 429.6 336.0 432.5"/><path d="M341.0 395.0C341.2 397.5 342.9 405.4 342.5 410.0C342.1 414.6 339.8 418.8 338.8 422.5C337.7 426.2 336.5 430.8 336.0 432.5"/><path d="M343.8 393.8C344.8 396.0 348.5 404.0 350.0 407.5C351.5 411.0 350.7 412.3 352.5 415.0C354.3 417.7 359.6 422.3 361.0 423.8"/><path d="M366.0 392.5C365.4 395.4 363.5 403.8 362.5 410.0C361.5 416.2 360.4 423.8 360.0 430.0C359.6 436.2 360.0 444.6 360.0 447.5"/><path d="M363.8 368.8C366.5 370.8 374.8 375.6 380.0 381.0C385.2 386.4 388.3 394.5 395.0 401.0C401.7 407.5 415.8 416.8 420.0 420.0"/><path d="M360.0 363.8C361.7 364.8 366.5 366.5 370.0 370.0C373.5 373.5 379.2 382.5 381.0 385.0"/><path d="M375.0 391.0C377.5 392.9 386.2 398.9 390.0 402.5C393.8 406.1 396.9 408.8 397.5 412.5C398.1 416.2 395.7 420.8 393.8 425.0C391.8 429.2 387.6 434.2 386.0 437.5C384.4 440.8 384.3 443.8 384.0 445.0"/><path d="M350.0 372.5C351.0 372.1 353.7 370.6 356.0 370.0C358.3 369.4 362.5 369.0 363.8 368.8"/><path d="M264.0 176.0C265.4 174.2 270.3 166.9 272.5 165.0C274.7 163.1 275.6 164.8 277.0 164.5C278.4 164.2 279.7 164.2 281.0 163.0C282.3 161.8 283.1 159.5 285.0 157.5C286.9 155.5 290.0 152.3 292.5 151.0C295.0 149.7 297.1 149.9 300.0 149.5C302.9 149.1 306.3 148.8 310.0 148.8C313.7 148.7 317.8 148.8 322.0 149.0C326.2 149.2 330.8 149.0 335.0 150.0C339.2 151.0 343.3 152.5 347.5 155.0C351.7 157.5 356.6 162.7 360.0 165.0C363.4 167.3 365.5 167.8 368.0 169.0C370.5 170.2 372.7 171.0 375.0 172.5C377.3 174.0 379.9 175.9 382.0 178.0C384.1 180.1 385.9 182.7 387.5 185.0C389.1 187.3 390.5 189.5 391.5 192.0C392.5 194.5 393.0 196.2 393.8 200.0C394.5 203.8 396.0 210.4 396.0 215.0C396.0 219.6 394.1 225.4 393.8 227.5" stroke-width="1.300"/><circle cx="306" cy="282.500" r="3.800"/><circle cx="361" cy="277.500" r="3.800"/></g></svg>
<div class="a tab" style="left:9px;top:507px;width:131px;height:19px"></div>
<div class="a tab" style="left:141px;top:507px;width:107px;height:19px"></div>
<div class="a tab" style="left:250px;top:507px;width:106px;height:19px"></div>
<div class="a tab" style="left:358px;top:507px;width:113px;height:19px"></div>
<div class="a tab" style="left:123px;top:488px;width:115px;height:19px"></div>
<div class="a tab" style="left:240px;top:488px;width:110px;height:19px"></div>
<div class="a tab" style="left:351px;top:488px;width:120px;height:19px"></div>
<div class="a tab" style="left:8px;top:486px;width:115px;height:22px"></div>
<svg class="a" style="left:37px;top:491px" width="16" height="16"><rect width="16" height="16" fill="#0000b0"/><rect x="2" y="1.500" width="12.500" height="12.500" fill="#8484e4"/><rect x="2" y="1.500" width="11" height="11" fill="#8e8e98"/><path d="M4 3H5M4 5.500H5M4 8H5M4 10.500H5M4 12.500H5M6.500 3H11M6.500 5.500H11.500M6.500 8H11M6.500 10.500H11.500M6.500 12.500H11" stroke="#000080" stroke-width="1.200"/></svg>
<div class="t tb" style="left:59.5px;top:491px;letter-spacing:-0.40px;">Project</div>
<svg class="a" style="left:149px;top:489px" width="16" height="16"><rect width="16" height="16" fill="#0000b0"/><rect x="2" y="1.500" width="12.500" height="12.500" fill="#8484e4"/><rect x="2" y="1.500" width="11" height="11" fill="#8e8e98"/><rect x="3.500" y="3.500" width="9" height="9" fill="none" stroke="#0000c8"/><rect x="6" y="6" width="4" height="4" fill="#0000c8"/></svg>
<div class="t tb" style="left:171.5px;top:490px;letter-spacing:-0.35px;">Pockets</div>
<svg class="a" style="left:267px;top:489px" width="16" height="16"><rect width="16" height="16" fill="#0000b0"/><rect x="2" y="1.500" width="12.500" height="12.500" fill="#8484e4"/><rect x="2" y="1.500" width="11" height="11" fill="#8e8e98"/><rect x="2" y="2" width="12" height="12" fill="#6060c0"/><rect x="4.500" y="4.500" width="7" height="7" fill="#808080" stroke="#0000c8"/></svg>
<div class="t tb" style="left:289.5px;top:490px;letter-spacing:-0.53px;">Offsets</div>
<svg class="a" style="left:378px;top:489px" width="16" height="16"><rect width="16" height="16" fill="#0000b0"/><rect x="2" y="1.500" width="12.500" height="12.500" fill="#8484e4"/><rect x="2" y="1.500" width="11" height="11" fill="#8e8e98"/><path d="M4.500 13V7.500Q8 3.500 11.500 7.500V13H9.500V10Q8 8.500 6.500 10V13Z" fill="#6868a0" stroke="#000080"/></svg>
<div class="t tb" style="left:400.5px;top:490px;letter-spacing:-0.83px;">Foam 2D</div>
<svg class="a" style="left:41px;top:508px" width="16" height="16"><rect width="16" height="16" fill="#0000b0"/><rect x="2" y="1.500" width="12.500" height="12.500" fill="#8484e4"/><rect x="2" y="1.500" width="11" height="11" fill="#8e8e98"/><rect x="2" y="0" width="12" height="2" fill="#8e8e98"/><path d="M2 1L5.500 5H11.500L14 1M2 13L5.500 10H11.500L14 13M5.500 5V10M11.500 5V10" stroke="#000090" stroke-width="1.200" fill="none"/></svg>
<div class="t tb" style="left:63.5px;top:509px;letter-spacing:-0.83px;">Foam 3D</div>
<svg class="a" style="left:172px;top:508px" width="16" height="16"><rect width="16" height="16" fill="#0000b0"/><rect x="2" y="1.500" width="12.500" height="12.500" fill="#8484e4"/><rect x="2" y="1.500" width="11" height="11" fill="#8e8e98"/><path d="M3 3.500Q6 5 7 7H12V9.500H7Q6 11.500 3 13" stroke="#0000c8" fill="none" stroke-width="1.300"/></svg>
<div class="t tb" style="left:195px;top:509px;letter-spacing:-0.43px;">Turn</div>
<svg class="a" style="left:281px;top:508px" width="16" height="16"><rect width="16" height="16" fill="#0000b0"/><rect x="2" y="1.500" width="12.500" height="12.500" fill="#8484e4"/><rect x="2" y="1.500" width="11" height="11" fill="#8e8e98"/><path d="M4 5H12M6.500 5V13M10 5V13" stroke="#0000c8" stroke-width="2" fill="none"/></svg>
<div class="t tb" style="left:304px;top:509px;letter-spacing:-0.27px;">Text</div>
<svg class="a" style="left:389px;top:508px" width="16" height="16"><rect width="16" height="16" fill="#209090"/><rect x="1" y="1" width="14" height="13" fill="#fff"/><rect x="2.500" y="2.500" width="11" height="10" fill="#fff" stroke="#c02020"/><rect x="4.500" y="4.500" width="7" height="6" fill="#f8f840" stroke="#40c040"/></svg>
<div class="t tb" style="left:411px;top:509px;letter-spacing:-0.61px;">Assist</div>
<div class="a" style="left:483px;top:86px;width:376px;height:444px;border:1px solid;border-color:#808080 #fff #fff #808080"></div>
<div class="a" style="left:484px;top:87px;width:374px;height:442px;border-left:1px solid #285060;border-top:1px solid #285060;background:linear-gradient(180deg,#1ee0e8,#32a0fa)"></div>
<svg class="a" id="viewdraw" style="left:0;top:0" width="960" height="729" viewBox="0 0 960 729" fill="none"><rect x="556" y="130.500" width="231.500" height="355" stroke="#22368c" stroke-width="1.800"/><g stroke="#8e8e8a" stroke-width="2.200" stroke-dasharray="4 4"><path d="M485.0 374.0L598.0 340.6"/><path d="M557.0 406.5L680.6 466.0"/><path d="M637.0 445.6L699.0 466.0"/><path d="M602.0 176.0L640.0 260.0L668.0 285.0L695.0 372.0"/><path d="M612.7 183.0L638.8 200.0L660.0 240.0"/><path d="M643.0 158.0L631.5 199.0L625.0 221.0L620.0 246.0L608.5 258.0L603.0 283.0L608.0 310.0"/><path d="M655.4 174.0L653.0 187.5L650.0 210.4L659.6 218.8L674.0 229.0L690.0 260.0L697.0 320.0"/><path d="M711.7 204.0L713.8 254.0L712.0 300.0L700.0 372.0"/><path d="M713.0 233.0L736.7 238.5"/><path d="M736.7 216.7L737.7 233.0"/><path d="M691.9 208.0L695.0 220.8L699.0 243.8L700.0 258.0L704.0 290.0"/><path d="M660.0 195.0L680.0 232.0L688.0 262.0"/><path d="M735.6 283.0L736.0 400.0"/><path d="M705.0 280.0L720.0 321.0L732.5 338.0L747.0 363.0L757.5 384.0L770.0 405.0"/><path d="M713.8 303.0L745.0 371.7L753.0 388.0L762.0 412.0"/><path d="M601.0 317.0L593.0 353.0L585.0 380.0"/><path d="M648.0 372.0L665.0 420.0"/><path d="M606.0 307.0L640.0 350.0L695.0 372.0"/><path d="M620.0 300.0L655.0 345.0L690.0 368.0"/><path d="M628.0 262.0L660.0 300.0L684.0 345.0L697.0 374.0"/><path d="M640.0 285.0L672.0 330.0L694.0 366.0"/><path d="M672.0 290.0L690.0 340.0L698.0 370.0"/><path d="M676.0 262.0L694.0 300.0L702.0 335.0L698.0 372.0"/><path d="M725.0 285.0L715.0 330.0L701.0 372.0"/><path d="M742.0 275.0L728.0 330.0L705.0 372.0"/><path d="M697.0 374.0L700.0 395.0L706.0 420.0"/><path d="M700.0 392.0L740.0 415.0L787.0 440.0"/><path d="M722.0 380.0L750.0 410.0L772.0 432.0"/><path d="M665.0 400.0L690.0 425.0L700.0 440.0"/><path d="M618.0 340.0L650.0 385.0L665.0 405.0"/><path d="M598.0 298.0L625.0 335.0L640.0 355.0"/><path d="M690.0 384.0L715.0 400.0L745.0 420.0"/><path d="M600.0 235.0L612.0 280.0"/><path d="M747.0 223.0L745.0 270.0"/></g><g stroke="#0404f0" stroke-width="1.800" stroke-linejoin="round" stroke-linecap="round"><path d="M596.0 296.0L593.0 280.0L593.0 260.4L587.7 248.0L588.8 239.6L580.4 223.0L582.5 187.5L593.0 183.0L601.0 173.5L621.0 150.0L633.8 145.0L643.8 132.0L655.0 130.5L680.0 130.5L702.5 133.8L715.0 142.5L722.0 151.0L730.4 153.0L749.0 167.7L755.4 183.3L757.5 195.8L760.6 206.2L755.4 239.6L757.5 252.0L749.0 268.8L746.0 280.0L747.0 311.0L744.0 340.4L719.0 370.6L707.5 380.0L693.0 382.0L643.0 374.8L620.0 340.4L619.0 327.0L615.8 311.0L606.5 307.0L598.0 297.7L593.0 280.0"/><path d="M598.0 195.0L580.4 223.0L604.4 223.0L596.0 231.0L604.4 215.6L599.0 236.5L612.7 228.0L604.4 244.8"/><path d="M651.0 212.5L644.0 223.0L641.9 230.0L638.8 228.0L635.6 237.5L635.6 250.0L627.3 263.5L621.0 275.0L612.7 271.9L597.0 257.3L593.0 268.8"/><path d="M644.0 155.2L646.0 173.0L655.4 183.3L651.0 212.5L657.5 223.0L669.0 230.0L678.3 233.3L691.9 221.9L695.0 214.6L699.0 226.0L691.9 217.7L680.4 213.5"/><path d="M654.4 170.8L666.9 165.6L664.8 191.7L680.4 199.0L683.5 192.7L693.0 205.2"/><path d="M666.9 165.6L667.5 185.4L686.7 189.6L698.0 181.2L709.6 201.0"/><path d="M661.7 228.0L649.0 253.0L672.0 248.0L672.0 233.3L672.0 251.0L713.8 253.0L708.5 244.8L713.8 250.0L736.7 239.6L744.0 230.0L737.7 216.7"/><path d="M740.8 196.9L750.0 208.3L747.0 223.0"/><path d="M736.7 239.6L743.0 254.0L747.0 260.4"/><path d="M641.9 263.5L662.7 254.0L674.0 266.7L668.0 262.5L689.8 261.5L693.0 273.0"/><path d="M644.0 280.0L651.0 273.0L662.7 268.8L672.0 275.0L676.0 283.0L671.0 288.5"/><path d="M650.0 273.0L653.0 284.0"/><path d="M656.5 274.0L664.8 273.0L668.0 278.0L664.8 283.3L657.5 283.3L654.4 278.0L656.5 274.0"/><path d="M703.0 296.0L701.0 279.0L703.0 266.7L707.5 263.5L716.0 262.5L724.0 256.0L734.6 262.5"/><path d="M711.7 270.8L720.0 265.6L728.0 267.7L735.6 276.0L730.4 281.0"/><path d="M716.5 270.0L724.0 270.0L726.5 274.5L723.5 279.0L717.0 279.0L715.0 274.5L716.5 270.0"/><path d="M724.0 262.0L731.0 268.0L727.0 263.0L734.0 270.0"/><path d="M703.0 280.0L707.5 307.0L713.8 314.0L698.0 328.0L696.0 318.5L688.8 318.5L684.6 321.7L680.4 316.5L683.5 312.0L687.0 311.0"/><path d="M695.0 316.5L706.5 317.5"/><path d="M600.0 270.0L597.0 274.0L607.0 277.5"/><path d="M673.0 342.5L683.5 346.7L689.8 341.5L697.0 343.5L708.5 337.0L711.7 342.5L719.0 339.0"/><path d="M683.5 346.7L695.0 352.0L707.5 345.6"/><path d="M690.8 358.8L703.0 358.0"/><path d="M695.0 356.0L703.5 359.5"/><path d="M617.0 327.0L612.7 336.0L601.0 336.0L600.0 371.7L585.6 382.0L578.0 393.5L557.0 404.5"/><path d="M614.8 336.0L599.0 384.0L661.7 413.0L671.0 417.5L690.0 452.0L677.5 453.4L674.0 458.0L682.0 467.5L694.7 473.0"/><path d="M619.0 338.0L633.5 352.0"/><path d="M585.6 382.0L587.7 396.7L587.0 423.8L594.7 466.0L616.5 486.0L666.5 438.8L690.0 452.0"/><path d="M662.7 382.0L668.0 400.8L663.8 411.0L670.0 415.4L678.0 405.0L682.5 400.0L695.0 393.5L697.0 390.0L680.0 384.5L662.7 382.0"/><path d="M695.0 390.4L698.0 405.0"/><path d="M702.0 403.0L715.8 406.0L726.0 400.8L742.0 395.6L743.0 392.5L734.6 384.0L719.0 370.6L703.0 386.0L697.0 390.0"/><path d="M695.0 405.0L683.5 421.7L681.0 433.0L693.0 437.8L693.0 447.0"/><path d="M697.0 405.0L697.8 430.0L687.0 436.0"/><path d="M700.0 405.0L708.5 421.7L719.7 434.7L719.7 462.8"/><path d="M727.0 403.0L724.0 421.7L719.7 434.7"/><path d="M670.0 415.4L679.0 431.0"/><path d="M719.0 370.6L726.0 374.8L743.0 390.4L751.0 396.7L759.6 413.0L787.0 433.0"/><path d="M736.7 400.8L743.0 410.0L759.6 417.5L761.0 437.8L746.0 447.0L746.0 462.0"/></g><path d="M521.500 481V452" stroke="#20d860" stroke-width="2.200"/><path d="M518 456.500L521.500 451L525 456.500" stroke="#20d860" stroke-width="1.200" fill="#20d860"/><path d="M524 485.500H541" stroke="#e82020" stroke-width="2.200"/><path d="M536 482.500L541.500 485.500L536 488.500" stroke="#e82020" stroke-width="1.200" fill="#e82020"/><circle cx="521.500" cy="485.500" r="2.800" fill="#f8f020"/><path d="M518.500 445.500L521.500 448.500L524.500 445.500M521.500 448.500V451" stroke="#20d860" stroke-width="1.300"/><path d="M547.500 482L554.500 489M554.500 482L547.500 489" stroke="#e82020" stroke-width="1.500"/><path d="M820 126.500V132.500H851.500V126.500" stroke="#fff" stroke-width="1.700"/><text x="826.500" y="126" fill="#fff" font-family="Liberation Sans,sans-serif" font-size="11.500" textLength="23" lengthAdjust="spacingAndGlyphs">1.55</text></svg>
<div class="a hl" style="left:862px;top:107px;width:94px;height:2px"></div>
<div class="a hl" style="left:862px;top:360px;width:94px;height:2px"></div>
<div class="a hl" style="left:862px;top:404px;width:94px;height:2px"></div>
<div class="a hl" style="left:862px;top:429px;width:94px;height:2px"></div>
<div class="a chk" style="left:861px;top:453px;width:95px;height:17px;border:1px solid;border-color:#808080 #fff #fff #808080"></div>
<div class="a chk" style="left:861px;top:472px;width:95px;height:17px;border:1px solid;border-color:#808080 #fff #fff #808080"></div>
<div class="a" style="left:865px;top:89px;width:12px;height:11px;background:#000"></div>
<div class="t" style="left:879px;top:90px;letter-spacing:-0.36px;">Clean</div>
<div class="a" style="left:865px;top:114px;width:12px;height:11px;background:#008000"></div>
<div class="t" style="left:879px;top:115px;letter-spacing:-0.15px;">Reset Origin</div>
<div class="a" style="left:865px;top:133px;width:12px;height:11px;background:#00f"></div>
<div class="t" style="left:879px;top:134px;letter-spacing:-0.18px;">Shift Drw</div>
<div class="a" style="left:865px;top:152px;width:12px;height:11px;background:#800000"></div>
<div class="t" style="left:879px;top:153px;letter-spacing:-0.12px;">Rem. Objects</div>
<div class="a" style="left:865px;top:171px;width:12px;height:11px;background:#808000"></div>
<div class="t" style="left:879px;top:172px;letter-spacing:-0.37px;">Scale</div>
<div class="a" style="left:865px;top:190px;width:12px;height:11px;background:#000080"></div>
<div class="t" style="left:879px;top:191px;letter-spacing:-0.27px;">Move Chain</div>
<div class="a" style="left:865px;top:209px;width:12px;height:11px;background:#008080"></div>
<div class="t" style="left:879px;top:210px;letter-spacing:-0.25px;">Set Depth</div>
<div class="a" style="left:865px;top:228px;width:12px;height:11px;background:#0f0"></div>
<div class="t" style="left:879px;top:229px;letter-spacing:-0.40px;">Drill Sel Circles</div>
<div class="a" style="left:865px;top:247px;width:12px;height:11px;background:#800000"></div>
<div class="t" style="left:879px;top:248px;letter-spacing:-0.34px;">Drill Rad Circles</div>
<div class="a" style="left:865px;top:266px;width:12px;height:11px;background:#808080"></div>
<div class="t" style="left:879px;top:267px;letter-spacing:0.04px;">Rotate</div>
<div class="a" style="left:865px;top:285px;width:12px;height:11px;background:#f00"></div>
<div class="t" style="left:879px;top:286px;letter-spacing:-0.48px;">Optimise</div>
<div class="a" style="left:865px;top:304px;width:12px;height:11px;background:#0f0"></div>
<div class="t" style="left:879px;top:305px;letter-spacing:-0.03px;">Leads Off</div>
<div class="a" style="left:865px;top:323px;width:12px;height:11px;background:#008000"></div>
<div class="t" style="left:879px;top:324px;letter-spacing:-0.11px;">Rem. Points</div>
<div class="a" style="left:865px;top:342px;width:12px;height:11px;background:#ff0"></div>
<div class="t" style="left:879px;top:343px;letter-spacing:-0.16px;">Relayer</div>
<div class="a" style="left:865px;top:367px;width:12px;height:11px;background:#0f0"></div>
<div class="t" style="left:879px;top:368px;letter-spacing:-0.42px;">Zoom Box</div>
<div class="a" style="left:865px;top:386px;width:12px;height:11px;background:#00f"></div>
<div class="t" style="left:879px;top:387px;letter-spacing:-0.34px;">Sel in Box</div>
<div class="a" style="left:865px;top:411px;width:12px;height:11px;background:#0f0"></div>
<div class="t" style="left:879px;top:412px;letter-spacing:-0.23px;">Select Inside</div>
<div class="a" style="left:865px;top:436px;width:12px;height:11px;background:#f0f"></div>
<div class="t" style="left:879px;top:437px;letter-spacing:-0.37px;">Desel All</div>
<div class="a" style="left:866px;top:456px;width:12px;height:11px;background:#00f"></div>
<div class="t" style="left:880px;top:457px;letter-spacing:-0.05px;">Rapids on/off</div>
<div class="a" style="left:866px;top:475px;width:12px;height:11px;background:#000"></div>
<div class="t" style="left:880px;top:476px;letter-spacing:-0.24px;">Chain-Ent Sel</div>
<div class="a" style="left:865px;top:493px;width:12px;height:11px;background:#f00"></div>
<div class="t" style="left:879px;top:494px;letter-spacing:-0.38px;">Single/Multiple</div>
<div class="a" style="left:860px;top:529px;width:96px;height:1px;background:#808080"></div>
<div class="a" style="left:4px;top:530px;width:952px;height:2px;background:#fff"></div>
<div class="a" style="left:4px;top:535px;width:952px;height:1px;background:#808080"></div>
<div class="a" style="left:4px;top:536px;width:952px;height:1px;background:#000"></div>
<div class="a raised2" style="left:7px;top:542px;width:11px;height:11px"></div>
<svg class="a" style="left:9px;top:544px" width="7" height="7"><path d="M1 1L6 6M6 1L1 6" stroke="#000" stroke-width="1.600"/></svg>
<div class="a raised2" style="left:7px;top:555px;width:11px;height:11px"></div>
<div class="a" style="left:10px;top:558px;width:5px;height:5px;border:1px solid #808080"></div>
<div class="a" style="left:7px;top:568px;width:11px;height:134px;background:#808080"></div>
<div class="t" style="left:-12px;top:669px;width:50px;transform:rotate(-90deg);color:#d4d0c8;font-size:10px;font-family:'Liberation Sans',sans-serif;letter-spacing:0.300px;text-align:center">TabView</div>
<div class="a sunk" style="left:23px;top:542px;width:928px;height:160px;background:#fff"></div>
<div class="log" style="top:545px">15:33:49 --- -- Adding Chain 123 to Layer 1</div>
<div class="log" style="top:563px">15:33:49 --- -- Adding Chain 124 to Layer 1</div>
<div class="log" style="top:581px">15:33:49 --- -- Adding Chain 125 to Layer 1</div>
<div class="log" style="top:599px">15:33:49 --- -- Adding Chain 126 to Layer 1</div>
<div class="log" style="top:617px">15:33:49 --- -- Layering....</div>
<div class="log" style="top:635px">15:33:49 --- -- Updating Chain statistics..</div>
<div class="log" style="top:653px">15:33:49 --- -- File Loaded</div>
<div class="a chk" style="left:933px;top:544px;width:16px;height:140px"></div>
<div class="a raised2" style="left:933px;top:544px;width:16px;height:16px"></div>
<svg class="a" style="left:937px;top:549px" width="8" height="5"><path d="M0 4.500L4 0.500L8 4.500Z" fill="#000"/></svg>
<div class="a raised2" style="left:933px;top:661px;width:16px;height:7px"></div>
<div class="a raised2" style="left:933px;top:668px;width:16px;height:16px"></div>
<svg class="a" style="left:937px;top:674px" width="8" height="5"><path d="M0 0.500L4 4.500L8 0.500Z" fill="#000"/></svg>
<div class="a" style="left:933px;top:684px;width:16px;height:16px;background:#d4d0c8"></div>
<div class="a chk" style="left:310px;top:684px;width:607px;height:16px"></div>
<div class="a raised2" style="left:917px;top:684px;width:16px;height:16px"></div>
<svg class="a" style="left:923px;top:688px" width="5" height="8"><path d="M0.500 0L4.500 4L0.500 8Z" fill="#808080"/></svg>
<div class="a" style="left:25px;top:684px;width:270px;height:16px;background:#d4d0c8"></div>
<div class="a" style="left:26px;top:684px;width:16px;height:16px;border:1px solid;border-color:#fff #808080 #808080 #fff;background:#d4d0c8"></div>
<div class="a" style="left:42px;top:684px;width:16px;height:16px;border:1px solid;border-color:#fff #808080 #808080 #fff;background:#d4d0c8"></div>
<div class="a" style="left:58px;top:684px;width:16px;height:16px;border:1px solid;border-color:#fff #808080 #808080 #fff;background:#d4d0c8"></div>
<div class="a" style="left:74px;top:684px;width:16px;height:16px;border:1px solid;border-color:#fff #808080 #808080 #fff;background:#d4d0c8"></div>
<svg class="a" style="left:26px;top:684px" width="64" height="16"><path d="M5 3.500V12.500" stroke="#000" stroke-width="2"/><path d="M11 3.500L6 8L11 12.500Z"/><path d="M26 3.500L21 8L26 12.500Z"/><path d="M38 3.500L43 8L38 12.500Z"/><path d="M53 3.500L58 8L53 12.500Z"/><path d="M59 3.500V12.500" stroke="#000" stroke-width="2"/></svg>
<svg class="a" style="left:88px;top:683px" width="210" height="18"><path d="M58 0.500H205" stroke="#000"/><path d="M59 17L62 1H104L109 17Z" fill="#d4d0c8"/><path d="M109 17L112 1H153L158 17Z" fill="#d4d0c8"/><path d="M158 17L161 1H205V17Z" fill="#d4d0c8"/><path d="M56 16.500H205" stroke="#000"/><path d="M57 17L61.500 1M104 1L109.500 17M108 17L111.500 3M153.500 1L158.500 17M157 17L160.500 3" stroke="#000" fill="none"/><path d="M2 1L6 17H53L58 1Z" fill="#fff"/><path d="M2 1L6 16.500H53L58 1" fill="none" stroke="#000"/></svg>
<div class="t tb" style="left:97.5px;top:685px;letter-spacing:0.07px;font-weight:bold;">Project</div>
<div class="t tb" style="left:152.5px;top:685px;letter-spacing:-0.34px;">Extents</div>
<div class="t tb" style="left:206px;top:685px;letter-spacing:-0.59px;">Layers</div>
<div class="t tb" style="left:255px;top:685px;letter-spacing:-0.55px;">Chains</div>
<div class="a raised2" style="left:295px;top:684px;width:15px;height:16px"></div>
<svg class="a" style="left:300px;top:688px" width="5" height="8"><path d="M4.500 0L0.500 4L4.500 8Z" fill="#808080"/></svg>
<div class="a hl" style="left:4px;top:705px;width:952px;height:2px"></div>
<div class="t" style="left:5.5px;top:711px;letter-spacing:-0.04px;">Ready</div>
<div class="a sunk1" style="left:849px;top:709px;width:26px;height:16px"></div>
<div class="a sunk1" style="left:877px;top:709px;width:29px;height:16px"></div>
<div class="a sunk1" style="left:907px;top:709px;width:31px;height:16px"></div>
<div class="t" style="left:879px;top:711px;letter-spacing:-0.40px;">NUM</div>
<svg class="a" style="left:943px;top:712px" width="13" height="13"><path d="M1 13L13 1M5 13L13 5M9 13L13 9" stroke="#808080" stroke-width="1.300"/><path d="M2 13L13 2M6 13L13 6M10 13L13 10" stroke="#fff" stroke-width="0.800"/></svg>
</body></html>
